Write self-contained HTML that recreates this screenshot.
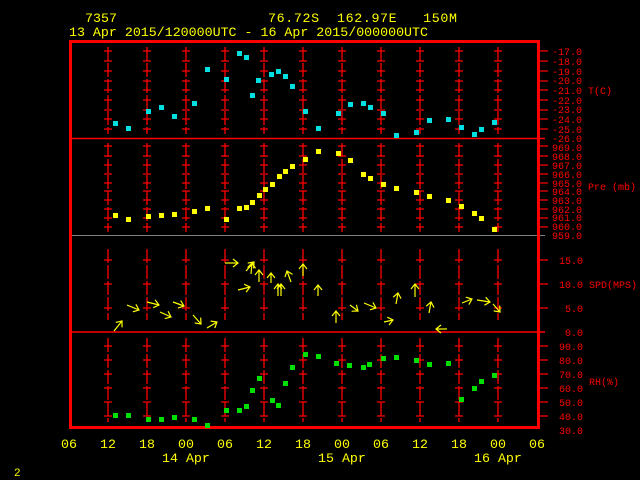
<!DOCTYPE html>
<html><head><meta charset="utf-8"><style>
html,body{margin:0;padding:0;background:#000;width:640px;height:480px;overflow:hidden}
svg{display:block}
text{font-family:"Liberation Mono",monospace;white-space:pre}
</style></head><body>
<svg width="640" height="480" viewBox="0 0 640 480" xmlns="http://www.w3.org/2000/svg" xml:space="preserve">
<defs>
<marker id="ah" markerUnits="userSpaceOnUse" markerWidth="12" markerHeight="12" refX="6" refY="6" orient="auto">
<path d="M1,2 L6,6 L1,10" fill="none" stroke="#ffff00" stroke-width="1.2"/>
</marker>
</defs>
<g fill="#ffff00" font-size="13.3">
<text x="85" y="22">7357</text>
<text x="268" y="22" textLength="189" lengthAdjust="spacing">76.72S  162.97E   150M</text>
<text x="69" y="36" textLength="359" lengthAdjust="spacing">13 Apr 2015/120000UTC - 16 Apr 2015/000000UTC</text>
</g>
<g stroke="#ff0000" stroke-width="1.3">
<path id="vl" d="M108,47V134M108,143V232M108,249V320M108,338V422" stroke-dasharray="14 2"/>
<use href="#vl" x="39"/><use href="#vl" x="78"/><use href="#vl" x="117"/><use href="#vl" x="156"/>
<use href="#vl" x="195"/><use href="#vl" x="234"/><use href="#vl" x="273"/><use href="#vl" x="312"/>
<use href="#vl" x="351"/><use href="#vl" x="390"/>
</g>
<g stroke="#ff0000" stroke-width="1.3">
<path id="tk" d="M104,51h8M104,61h8M104,71h8M104,81h8M104,90h8M104,100h8M104,110h8M104,119h8M104,129h8M104,146h8M104,156h8M104,165h8M104,174h8M104,183h8M104,191h8M104,200h8M104,209h8M104,218h8M104,227h8M104,260h8M104,284h8M104,308h8M104,346h8M104,360h8M104,374h8M104,388h8M104,402h8M104,416h8"/>
<use href="#tk" x="39"/><use href="#tk" x="78"/><use href="#tk" x="117"/><use href="#tk" x="156"/>
<use href="#tk" x="195"/><use href="#tk" x="234"/><use href="#tk" x="273"/><use href="#tk" x="312"/>
<use href="#tk" x="351"/><use href="#tk" x="390"/>
<use href="#tk" x="436"/>
</g>
<line x1="70" y1="138.5" x2="545" y2="138.5" stroke="#ff0000" stroke-width="1.5"/>
<line x1="70" y1="235.5" x2="545" y2="235.5" stroke="#808080" stroke-width="1"/>
<line x1="70" y1="332" x2="545" y2="332" stroke="#ff0000" stroke-width="1.5"/>
<rect x="70.5" y="41.5" width="468" height="386" fill="none" stroke="#ff0000" stroke-width="3"/>
<g fill="#ff0000" font-size="10">
<text x="552" y="55">-17.0</text><text x="552" y="65">-18.0</text><text x="552" y="75">-19.0</text>
<text x="552" y="84">-20.0</text><text x="552" y="94">-21.0</text><text x="552" y="104">-22.0</text>
<text x="552" y="113">-23.0</text><text x="552" y="123">-24.0</text><text x="552" y="133">-25.0</text>
<text x="552" y="142">-26.0</text><text x="588" y="94">T(C)</text>
<text x="552" y="151">969.0</text><text x="552" y="160">968.0</text><text x="552" y="169">967.0</text>
<text x="552" y="178">966.0</text><text x="552" y="187">965.0</text><text x="552" y="195">964.0</text>
<text x="552" y="204">963.0</text><text x="552" y="213">962.0</text><text x="552" y="221">961.0</text>
<text x="552" y="230">960.0</text><text x="552" y="239">959.0</text><text x="588" y="190">Pre (mb)</text>
<text x="559" y="264">15.0</text><text x="559" y="288">10.0</text><text x="565" y="312">5.0</text>
<text x="565" y="336">0.0</text><text x="589" y="288">SPD(MPS)</text>
<text x="559" y="350">90.0</text><text x="559" y="364">80.0</text><text x="559" y="378">70.0</text>
<text x="559" y="392">60.0</text><text x="559" y="406">50.0</text><text x="559" y="420">40.0</text>
<text x="559" y="434">30.0</text><text x="589" y="385">RH(%)</text>
</g>
<g fill="#ffff00" font-size="13.3">
<text x="61" y="448">06</text><text x="100" y="448">12</text><text x="139" y="448">18</text>
<text x="178" y="448">00</text><text x="217" y="448">06</text><text x="256" y="448">12</text>
<text x="295" y="448">18</text><text x="334" y="448">00</text><text x="373" y="448">06</text>
<text x="412" y="448">12</text><text x="451" y="448">18</text><text x="490" y="448">00</text>
<text x="529" y="448">06</text>
<text x="162" y="462">14 Apr</text><text x="318" y="462">15 Apr</text><text x="474" y="462">16 Apr</text>
<text x="14" y="476" font-size="11">2</text>
</g>
<g fill="#00e0e0">
<rect x="113" y="121" width="5" height="5"/><rect x="126" y="126" width="5" height="5"/><rect x="146" y="109" width="5" height="5"/><rect x="159" y="105" width="5" height="5"/><rect x="172" y="114" width="5" height="5"/><rect x="192" y="101" width="5" height="5"/><rect x="205" y="67" width="5" height="5"/><rect x="224" y="77" width="5" height="5"/><rect x="237" y="51" width="5" height="5"/><rect x="244" y="55" width="5" height="5"/><rect x="250" y="93" width="5" height="5"/><rect x="256" y="78" width="5" height="5"/><rect x="269" y="72" width="5" height="5"/><rect x="276" y="69" width="5" height="5"/><rect x="283" y="74" width="5" height="5"/><rect x="290" y="84" width="5" height="5"/><rect x="303" y="109" width="5" height="5"/><rect x="316" y="126" width="5" height="5"/><rect x="336" y="111" width="5" height="5"/><rect x="348" y="102" width="5" height="5"/><rect x="361" y="101" width="5" height="5"/><rect x="368" y="105" width="5" height="5"/><rect x="381" y="111" width="5" height="5"/><rect x="394" y="133" width="5" height="5"/><rect x="414" y="130" width="5" height="5"/><rect x="427" y="118" width="5" height="5"/><rect x="446" y="117" width="5" height="5"/><rect x="459" y="125" width="5" height="5"/><rect x="472" y="132" width="5" height="5"/><rect x="479" y="127" width="5" height="5"/><rect x="492" y="120" width="5" height="5"/>
</g>
<g fill="#ffff00">
<rect x="113" y="213" width="5" height="5"/><rect x="126" y="217" width="5" height="5"/><rect x="146" y="214" width="5" height="5"/><rect x="159" y="213" width="5" height="5"/><rect x="172" y="212" width="5" height="5"/><rect x="192" y="209" width="5" height="5"/><rect x="205" y="206" width="5" height="5"/><rect x="224" y="217" width="5" height="5"/><rect x="237" y="206" width="5" height="5"/><rect x="244" y="205" width="5" height="5"/><rect x="250" y="200" width="5" height="5"/><rect x="257" y="193" width="5" height="5"/><rect x="263" y="187" width="5" height="5"/><rect x="270" y="182" width="5" height="5"/><rect x="277" y="174" width="5" height="5"/><rect x="283" y="169" width="5" height="5"/><rect x="290" y="164" width="5" height="5"/><rect x="303" y="157" width="5" height="5"/><rect x="316" y="149" width="5" height="5"/><rect x="336" y="151" width="5" height="5"/><rect x="348" y="158" width="5" height="5"/><rect x="361" y="172" width="5" height="5"/><rect x="368" y="176" width="5" height="5"/><rect x="381" y="182" width="5" height="5"/><rect x="394" y="186" width="5" height="5"/><rect x="414" y="190" width="5" height="5"/><rect x="427" y="194" width="5" height="5"/><rect x="446" y="198" width="5" height="5"/><rect x="459" y="204" width="5" height="5"/><rect x="472" y="211" width="5" height="5"/><rect x="479" y="216" width="5" height="5"/><rect x="492" y="227" width="5" height="5"/>
</g>
<g fill="#00e000">
<rect x="113" y="413" width="5" height="5"/><rect x="126" y="413" width="5" height="5"/><rect x="146" y="417" width="5" height="5"/><rect x="159" y="417" width="5" height="5"/><rect x="172" y="415" width="5" height="5"/><rect x="192" y="417" width="5" height="5"/><rect x="205" y="423" width="5" height="5"/><rect x="224" y="408" width="5" height="5"/><rect x="237" y="408" width="5" height="5"/><rect x="244" y="404" width="5" height="5"/><rect x="250" y="388" width="5" height="5"/><rect x="257" y="376" width="5" height="5"/><rect x="270" y="398" width="5" height="5"/><rect x="276" y="403" width="5" height="5"/><rect x="283" y="381" width="5" height="5"/><rect x="290" y="365" width="5" height="5"/><rect x="303" y="352" width="5" height="5"/><rect x="316" y="354" width="5" height="5"/><rect x="334" y="361" width="5" height="5"/><rect x="347" y="363" width="5" height="5"/><rect x="361" y="365" width="5" height="5"/><rect x="367" y="362" width="5" height="5"/><rect x="381" y="356" width="5" height="5"/><rect x="394" y="355" width="5" height="5"/><rect x="414" y="358" width="5" height="5"/><rect x="427" y="362" width="5" height="5"/><rect x="446" y="361" width="5" height="5"/><rect x="459" y="397" width="5" height="5"/><rect x="472" y="386" width="5" height="5"/><rect x="479" y="379" width="5" height="5"/><rect x="492" y="373" width="5" height="5"/>
</g>
<g stroke="#ffff00" stroke-width="1.2" fill="none" marker-end="url(#ah)">
<line x1="114" y1="331" x2="122" y2="321"/>
<line x1="127" y1="305" x2="139" y2="310"/>
<line x1="147" y1="302" x2="159" y2="305"/>
<line x1="160" y1="312" x2="171" y2="317"/>
<line x1="173" y1="302" x2="184" y2="306"/>
<line x1="193" y1="315" x2="201" y2="324"/>
<line x1="207" y1="328" x2="217" y2="322"/>
<line x1="225" y1="263" x2="238" y2="263"/>
<line x1="238" y1="290" x2="250" y2="287"/>
<line x1="246" y1="271" x2="254" y2="262"/>
<line x1="251" y1="274" x2="252" y2="263"/>
<line x1="259" y1="282" x2="259" y2="270"/>
<line x1="271" y1="283" x2="271" y2="273"/>
<line x1="291" y1="282" x2="287" y2="271"/>
<line x1="278" y1="296" x2="278" y2="284"/>
<line x1="281" y1="296" x2="281" y2="284"/>
<line x1="303" y1="276" x2="303" y2="264"/>
<line x1="318" y1="296" x2="318" y2="285"/>
<line x1="336" y1="323" x2="336" y2="311"/>
<line x1="350" y1="305" x2="358" y2="311"/>
<line x1="364" y1="303" x2="376" y2="308"/>
<line x1="384" y1="322" x2="393" y2="320"/>
<line x1="396" y1="304" x2="398" y2="293"/>
<line x1="415" y1="297" x2="415" y2="284"/>
<line x1="429" y1="313" x2="431" y2="302"/>
<line x1="447" y1="329" x2="436" y2="329"/>
<line x1="462" y1="303" x2="472" y2="299"/>
<line x1="477" y1="300" x2="490" y2="302"/>
<line x1="493" y1="304" x2="500" y2="312"/>
</g>
</svg>
</body></html>
